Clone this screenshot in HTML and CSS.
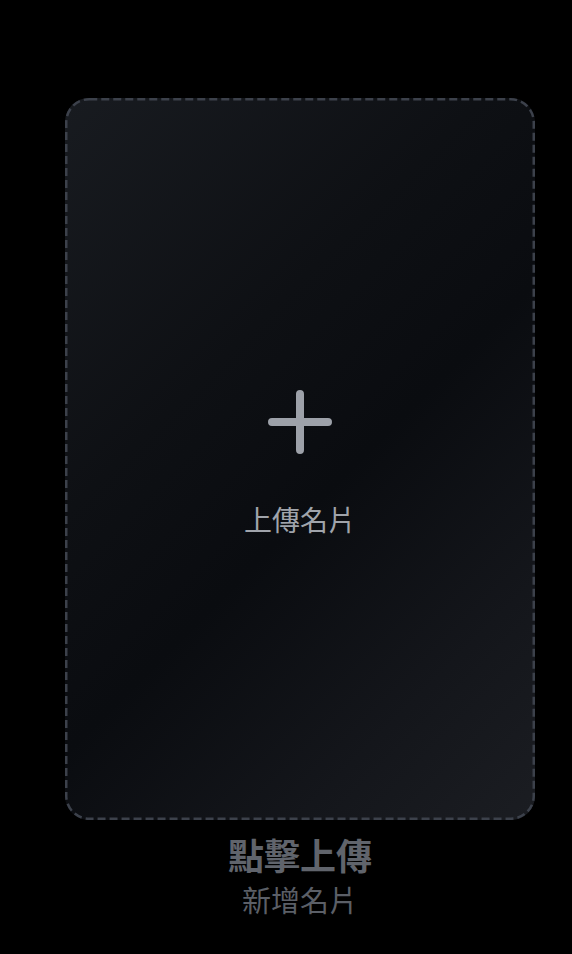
FILE: index.html
```html
<!DOCTYPE html>
<html lang="zh-Hant">
<head>
<meta charset="utf-8">
<link rel="stylesheet" href="styles.css">
</head>
<body>
<main class="page">
  <div class="item">
    <button class="card" type="button">
      <svg class="card-border" width="470" height="722" viewBox="0 0 470 722" aria-hidden="true">
        <rect x="1.25" y="1.25" width="467.5" height="719.5" rx="23" ry="23" fill="none" stroke="#3c414b" stroke-width="2.5" stroke-dasharray="8 4"/>
      </svg>
      <svg class="plus" width="64" height="64" viewBox="0 0 64 64" aria-hidden="true">
        <path d="M32 4V60M4 32H60" stroke="#9da1a9" stroke-width="8" stroke-linecap="round" fill="none"/>
      </svg>
      <span class="card-label">上傳名片</span>
    </button>
    <div class="caption">
      <div class="title">點擊上傳</div>
      <div class="subtitle">新增名片</div>
    </div>
  </div>
</main>
</body>
</html>
```
FILE: styles.css
```css
html, body {
  margin: 0;
  padding: 0;
  background: #000;
}
body {
  font-family: "Noto Sans CJK TC", "Noto Sans", sans-serif;
}
.page {
  padding: 98px 37px 0 65px;
}
.item {
  width: 470px;
  display: flex;
  flex-direction: column;
  align-items: center;
}
.card {
  position: relative;
  box-sizing: border-box;
  width: 470px;
  height: 722px;
  border: none;
  border-radius: 24px;
  background: linear-gradient(135deg, #181b20 0%, #0e1014 35%, #0a0c10 55%, #14161b 80%, #1b1d22 100%);
  display: flex;
  flex-direction: column;
  align-items: center;
  justify-content: center;
  gap: 46px;
  padding: 10px 0 0 0;
  margin: 0;
  font: inherit;
  cursor: pointer;
}
.card-border {
  position: absolute;
  left: 0;
  top: 0;
}
.plus {
  display: block;
}
.card-label {
  font-size: 28px;
  line-height: 38px;
  color: #a0a4ab;
}
.caption {
  margin-top: 12px;
  text-align: center;
}
.title {
  font-size: 36px;
  font-weight: 700;
  line-height: 44px;
  color: #60646c;
}
.subtitle {
  margin-top: 4px;
  font-size: 29px;
  line-height: 38px;
  color: #5b5f67;
}
```
